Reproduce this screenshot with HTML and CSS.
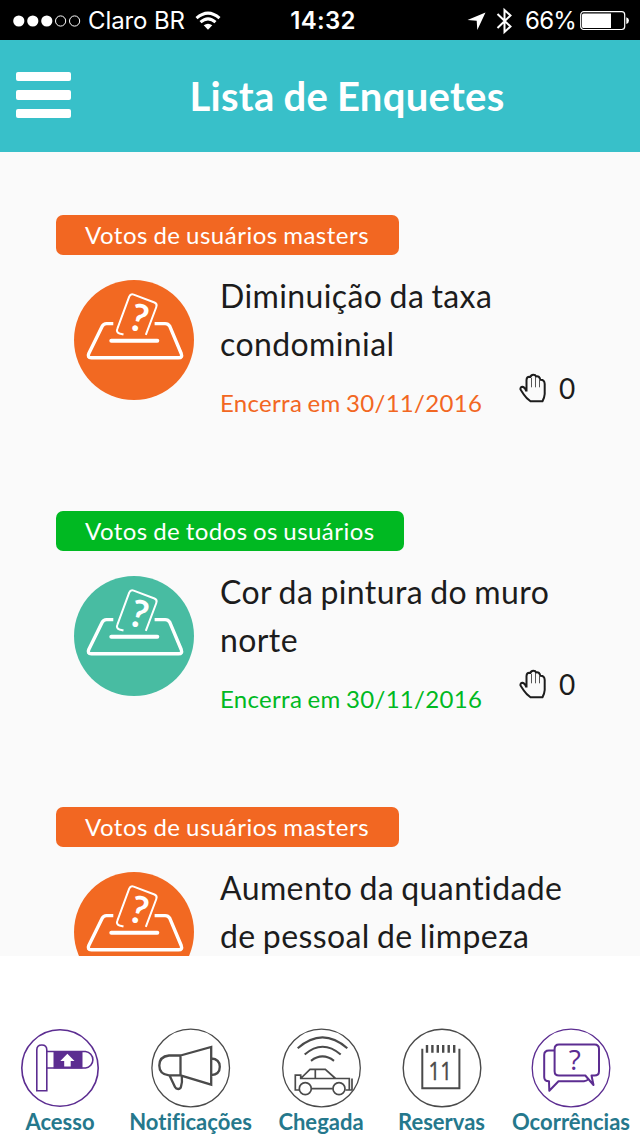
FILE: index.html
```html
<!DOCTYPE html>
<html lang="pt-BR">
<head>
<meta charset="utf-8">
<title>Lista de Enquetes</title>
<link rel="stylesheet" href="styles.css">
</head>
<body>
<svg class="defs" width="0" height="0" aria-hidden="true">
  <symbol id="ballot" viewBox="0 0 120 120">
    <g fill="none" stroke="#fff" stroke-linecap="round" stroke-linejoin="round">
      <path stroke-width="3.400" stroke-linecap="butt" d="M39.300 43.600H32.500q-3 0-4.300 2.600L14.800 73.500q-1.800 4.300 2.500 4.300H104.500q4.300 0 2.700-4.300L95.700 46.200q-1.500-2.600-4.500-2.600H80.600"/>
      <path stroke-width="2" stroke-linecap="butt" d="M49.500 54.500L45.500 53.500Q42 52 43.300 48.800L55.200 16.700Q56.500 13.500 59.700 14.600L80.500 22.500Q83.500 23.800 82.300 27L71.800 54.800"/>
      <path stroke-width="4" d="M37.300 60.700H83.300"/>
    </g>
    <text class="mark" transform="translate(65 38.500) rotate(16)" x="0" y="13" text-anchor="middle">?</text>
  </symbol>
  <symbol id="hand" viewBox="0 0 28 30">
    <path fill="none" stroke="#1c1c1c" stroke-width="2" stroke-linejoin="round" d="M7.500 18.500V7Q7.700 3.800 10.300 3.800L11.500 4Q12 1.700 14.300 1.700T17 3.400Q20.600 2.600 21.300 6.800Q25.600 6.600 25.700 11V21Q25.500 24.500 23.500 28.200H11.500Q7 25 4.800 21.500L1.500 16.500Q1 14 3.600 13.800Q6 14.300 7.500 18.500"/>
    <path stroke="#555" stroke-width="1" d="M12.500 5v9.300M16.500 4v10.300M20.500 6v8.300"/>
  </symbol>
</svg>

<header class="status">
  <div class="carrier">
    <svg width="68" height="12" viewBox="0 0 68 12"><g fill="#fff"><circle cx="5.800" cy="6" r="5.600"/><circle cx="19.800" cy="6" r="5.600"/><circle cx="33.800" cy="6" r="5.600"/></g><g fill="none" stroke="#fff"><circle cx="47.600" cy="6" r="5.100"/><circle cx="61.600" cy="6" r="5.100"/></g></svg>
    <span class="operator">Claro BR</span>
    <svg width="26" height="20" viewBox="0 0 26 20"><g fill="none" stroke="#fff" stroke-width="3"><path d="M1.500 7.200Q13-3 24.500 7.200"/><path d="M5.500 11.200Q13 4.500 20.500 11.200"/></g><path fill="#fff" d="M8.700 14.300Q13 11 17.300 14.300L13 18.800z"/></svg>
  </div>
  <div class="clock">14:32</div>
  <div class="indicators">
    <svg width="19" height="19" viewBox="0 0 19 19"><path fill="#fff" d="M18.500.5L10.300 18 9.700 8.700.5 8z"/></svg>
    <svg class="bluetooth" width="17" height="28" viewBox="0 0 17 28"><path fill="none" stroke="#fff" stroke-width="2" d="M1.500 7L14.500 19.500 8.500 25V3L14.500 8.500 1.500 21"/></svg>
    <span class="percent">66%</span>
    <svg width="49" height="20" viewBox="0 0 49 20"><rect x=".7" y=".7" width="44" height="17.800" rx="3" fill="none" stroke="#fff" stroke-width="1.200"/><path fill="#fff" d="M3.500 2.500H31V17H3.500Q2 17 2 15.500V4Q2 2.500 3.500 2.500M46.300 6.300Q49 7 49 9.600T46.300 13z"/></svg>
  </div>
</header>

<div class="topbar">
  <button class="menu" aria-label="Menu"><span></span><span></span><span></span></button>
  <h1 class="heading">Lista de Enquetes</h1>
</div>

<main class="polls">
  <article class="poll masters">
    <div class="tag">Votos de usuários masters</div>
    <div class="row">
      <svg class="badge" width="120" height="120"><use href="#ballot"/></svg>
      <div class="info">
        <h2 class="title">Diminuição da taxa<br>condominial</h2>
        <p class="deadline">Encerra em 30/11/2016</p>
      </div>
      <div class="votes"><svg width="28" height="30"><use href="#hand"/></svg><span>0</span></div>
    </div>
  </article>
  <article class="poll everyone">
    <div class="tag">Votos de todos os usuários</div>
    <div class="row">
      <svg class="badge" width="120" height="120"><use href="#ballot"/></svg>
      <div class="info">
        <h2 class="title">Cor da pintura do muro<br>norte</h2>
        <p class="deadline">Encerra em 30/11/2016</p>
      </div>
      <div class="votes"><svg width="28" height="30"><use href="#hand"/></svg><span>0</span></div>
    </div>
  </article>
  <article class="poll masters">
    <div class="tag">Votos de usuários masters</div>
    <div class="row">
      <svg class="badge" width="120" height="120"><use href="#ballot"/></svg>
      <div class="info">
        <h2 class="title">Aumento da quantidade<br>de pessoal de limpeza</h2>
      </div>
    </div>
  </article>
</main>

<nav class="tabs">
  <a class="tab">
    <svg width="80" height="80" viewBox="0 0 80 80"><g fill="none" stroke="#5c2d91" stroke-width="1.600"><circle cx="40" cy="40" r="38.200"/><path d="M16.800 62.700V22q0-5 5-5t5 5V62.700zM27 23.500H65.500a8.300 8.300 0 0 1 0 16.500H27"/></g><path fill="#5c2d91" d="M33.500 23H62.500V40.500H33.500z"/><path fill="#fff" d="M47.400 25.700L54.500 33H50.700V38.500H44.200V33H40.300z"/></svg>
    <span>Acesso</span>
  </a>
  <a class="tab">
    <svg width="80" height="80" viewBox="0 0 80 80"><g fill="none" stroke="#4a4a4a" stroke-width="2.300"><circle cx="39.700" cy="40" r="38.800" stroke-width="1.300"/><path d="M29.500 27.500H18Q8.300 28.500 8.300 37.500T18 47.300H29.500zM29.500 27.500L60.200 19V56.700L29.500 47.300M60.200 30.500Q68.800 31 68.800 38.800T60.200 47.200M18.800 48L24 59Q25 61 27.200 61T30 58.700Q31.500 54 30.800 48"/></g></svg>
    <span>Notificações</span>
  </a>
  <a class="tab">
    <svg width="80" height="80" viewBox="0 0 80 80"><g fill="none" stroke="#4a4a4a" stroke-width="1.700"><circle cx="40.500" cy="40" r="38.800" stroke-width="1.300"/><path stroke-width="2.100" d="M16.700 20.200Q41.500-1.500 66.300 20.200M23.700 26.500Q41.500 11 59.700 26.500M30 32.800Q41.500 24 53 32.800"/><path d="M18 62H14.300V47.200H19.700V50.500H68.300V62H64.500M19.700 50.500L29 41.400H44.300L54.500 50.500M34.300 41.400V50.500M30.500 60.700H51.800M71 50.500V62.500M64.500 62H71"/><circle cx="24.300" cy="60.700" r="6"/><circle cx="58" cy="60.700" r="6"/></g></svg>
    <span>Chegada</span>
  </a>
  <a class="tab">
    <svg width="80" height="80" viewBox="0 0 80 80"><g fill="none" stroke="#4a4a4a" stroke-width="2"><circle cx="40" cy="40" r="38.800" stroke-width="1.400"/><path d="M20.300 20.700V60.300H57.400V20.700"/><path stroke-width="2.400" d="M25 17v7.700M30.400 17v7.700M35.800 17v7.700M41.200 17v7.700M46.700 17v7.700M52.200 17v7.700"/></g><text class="day" transform="translate(38.200 52) scale(.82 1)" x="0" y="0" text-anchor="middle">11</text></svg>
    <span>Reservas</span>
  </a>
  <a class="tab">
    <svg width="80" height="80" viewBox="0 0 80 80"><g fill="none" stroke="#5c2d91" stroke-width="2" stroke-linejoin="round"><circle cx="40" cy="40" r="38.800" stroke-width="1.300"/><path d="M28 16.500H63.500Q68 16.500 68 21V43.300Q68 47.500 63.500 47.500H60.500L62.500 57 54.300 47.500H28Q23.600 47.500 23.600 43.300V21Q23.600 16.500 28 16.500M23.300 22.500H18Q13.200 22.500 13.200 27V49Q13.200 53.300 18 53.300L18.300 62.800 27.500 53.300H53Q56 53 57.500 51"/></g><text class="doubt" x="43.800" y="42.300" text-anchor="middle">?</text></svg>
    <span>Ocorrências</span>
  </a>
</nav>
</body>
</html>
```
FILE: styles.css
```css
* { box-sizing: border-box; }
body {
  margin: 0;
  width: 640px;
  height: 1136px;
  overflow: hidden;
  display: flex;
  flex-direction: column;
  background: #fff;
  color: #1c1c1c;
  font-family: Lato, sans-serif;
}
svg { display: block; flex: none; }
h1, h2, p { margin: 0; font-weight: 400; white-space: nowrap; }
.defs { display: none; }

.status {
  height: 40px;
  flex: none;
  display: grid;
  grid-template-columns: 1fr 70px 1fr;
  align-items: center;
  padding: 1px 11px 0 13px;
  background: #000;
  color: #fff;
  font: 24px/40px Inter, sans-serif;
  white-space: nowrap;
}
.carrier, .indicators { display: flex; align-items: center; }
.operator { width: 98px; margin: 0 9px 0 7px; letter-spacing: -.1px; }
.clock { padding-left: 4px; font-weight: 600; text-align: center; letter-spacing: .3px; }
.indicators { justify-content: flex-end; }
.bluetooth { margin: 0 12px 0 10px; }
.percent { width: 49px; margin-right: 6px; letter-spacing: -.7px; }

.topbar {
  height: 112px;
  flex: none;
  display: flex;
  align-items: center;
  padding: 0 16px;
  background: #38c0c9;
}
.menu {
  display: grid;
  gap: 9px;
  width: 55px;
  margin-top: -2px;
  padding: 0;
  border: 0;
  background: none;
}
.menu span { height: 9.500px; border-radius: 2px; background: #fff; }
.heading {
  flex: 1;
  padding-right: 1px;
  text-align: center;
  color: #fff;
  font-size: 40px;
  font-weight: 700;
  letter-spacing: .3px;
  word-spacing: -1.2px;
}

.polls {
  height: 804px;
  flex: none;
  overflow: hidden;
  padding: 63px 56px 0;
  background: #fafafa;
}
.poll { height: 296px; }
.tag {
  width: 343px;
  height: 40px;
  padding-left: 29px;
  border-radius: 7px;
  background: var(--tag);
  color: #fff;
  font-size: 24px;
  line-height: 39px;
  letter-spacing: .5px;
  word-spacing: -1.1px;
  white-space: nowrap;
}
.masters { --tag: #f26722; --badge: #f26922; }
.everyone { --tag: #00b922; --badge: #48bca2; }
.everyone .tag { width: 348px; letter-spacing: .45px; }
.row {
  display: grid;
  grid-template-columns: 120px 299px 56px;
  padding: 25px 0 0 18px;
}
.badge { border-radius: 50%; background: var(--badge); }
.info { padding-left: 26px; margin-top: -8px; }
.title { font-size: 32px; line-height: 48px; letter-spacing: .4px; word-spacing: -1.4px; }
.deadline {
  margin-top: 20px;
  color: var(--tag);
  font-size: 24px;
  line-height: 30px;
  letter-spacing: .3px;
  word-spacing: -1px;
}
.votes {
  display: flex;
  align-items: center;
  gap: 12px;
  height: 30px;
  margin-top: 93px;
  margin-left: 26px;
  font-size: 28px;
}
.votes span { margin-top: -1px; }
.mark { fill: #fff; font: 700 38px Lato, sans-serif; }

.tabs {
  flex: 1;
  display: grid;
  grid-template-columns: 120px 141px 120px 121px 138px;
  padding-top: 72px;
}
.tab {
  display: flex;
  flex-direction: column;
  align-items: center;
  color: #25788c;
  font-size: 22px;
  font-weight: 700;
  line-height: 28px;
}
.tab span { letter-spacing: .01px; font-variant-ligatures: common-ligatures; }
.day { fill: #4a4a4a; stroke: #4a4a4a; stroke-width: .4px; font: 25px "Open Sans", sans-serif; }
.doubt { fill: #5c2d91; font: 28px "Open Sans", sans-serif; }
```
